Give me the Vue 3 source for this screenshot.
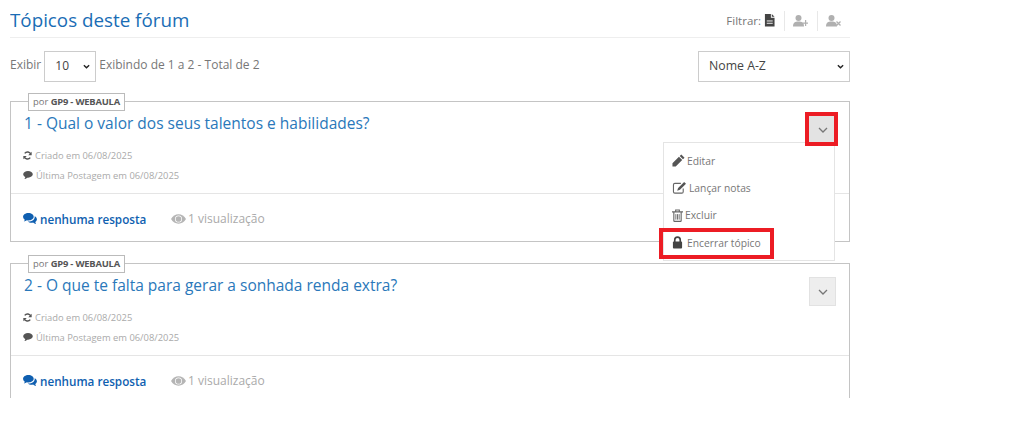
<script setup>
const topics = [
  { id: 1, title: '1 - Qual o valor dos seus talentos e habilidades?', open: true },
  { id: 2, title: '2 - O que te falta para gerar a sonhada renda extra?', open: false }
]
</script>

<template>
  <div class="page">
    <header class="head">
      <h1>Tópicos deste fórum</h1>
      <div class="filters">
        <span class="flabel">Filtrar:</span>
        <svg class="fi" viewBox="0 0 12 14" width="11" height="13"><path fill="#444" d="M1 0h6.500v4H11.500v9.500H1z M8.500 0l3 3h-3z"/><rect x="3" y="7" width="6.500" height="1" fill="#fff"/><rect x="3" y="9.500" width="6.500" height="1" fill="#fff"/></svg>
        <span class="fsep"></span>
        <svg class="fi" viewBox="0 0 15 12" width="15" height="12"><circle cx="5.500" cy="3" r="3" fill="#b0b0b0"/><path fill="#b0b0b0" d="M0 11.500c0-3.800 2-5 5.500-5s5.500 1.200 5.500 5z"/><path fill="#b0b0b0" d="M9.500 7.500H12V5h1.200v2.500H15v1.200h-1.800V11H12V8.700H9.500z"/></svg>
        <span class="fsep"></span>
        <svg class="fi" viewBox="0 0 15 12" width="15" height="12"><circle cx="5.500" cy="3" r="3" fill="#b0b0b0"/><path fill="#b0b0b0" d="M0 11.500c0-3.800 2-5 5.500-5s5.500 1.200 5.500 5z"/><path stroke="#b0b0b0" stroke-width="1.300" d="M10.500 6.500l4 4M14.500 6.500l-4 4"/></svg>
      </div>
    </header>

    <div class="toolbar">
      <div class="show">
        <span class="up">Exibir</span>
        <select class="sel-n"><option>10</option></select>
        <span class="up">Exibindo de 1 a 2 - Total de 2</span>
      </div>
      <select class="sel-o"><option>Nome A-Z</option></select>
    </div>

    <article v-for="t in topics" :key="t.id" class="card">
      <span class="tag">por <b>GP9 - WEBAULA</b></span>
      <div class="body">
        <div class="row">
          <a class="title">{{ t.title }}</a>
          <button class="drop" :class="{ marked: t.open }">
            <svg viewBox="0 0 10 6" width="10" height="6"><path d="M1 1l4 4 4-4" fill="none" stroke="#777" stroke-width="1.300"/></svg>
          </button>
        </div>
        <p class="meta first">
          <svg viewBox="0 0 12 12" width="9" height="9"><path d="M10.500 4.500A4.700 4.700 0 0 0 2.300 3.200M1.500 7.500a4.700 4.700 0 0 0 8.200 1.300" fill="none" stroke="#555" stroke-width="2"/><path fill="#555" d="M11.500 1v4.500H7zM.5 11V6.500H5z"/></svg>
          <span>Criado em 06/08/2025</span>
        </p>
        <p class="meta">
          <svg viewBox="0 0 12 10" width="10" height="8"><path fill="#555" d="M6 0c3.300 0 6 1.800 6 4.200S9.300 8.300 6 8.300h-1C4 9.300 2.800 9.800 1.500 10c.6-.7 1-1.500 1.100-2.400C1 6.900 0 5.700 0 4.200 0 1.800 2.700 0 6 0z"/></svg>
          <span>Última Postagem em 06/08/2025</span>
        </p>
      </div>
      <footer class="foot">
        <span class="replies">
          <svg viewBox="0 0 15 13" width="14" height="12"><path fill="#0f5fb0" d="M5.800 0C9 0 11.500 1.800 11.500 4S9 8 5.800 8c-.6 0-1.100 0-1.600-.2C3.200 8.600 2 9 .8 9.200c.5-.6.9-1.300 1-2C.7 6.400 0 5.300 0 4 0 1.800 2.600 0 5.800 0z"/><path fill="#0f5fb0" d="M12.600 3.400C14 4.200 15 5.400 15 6.800c0 1.200-.7 2.300-1.800 3 .1.800.5 1.500 1 2.100-1.300-.2-2.400-.7-3.400-1.500-.5.100-1 .2-1.600.2-1.700 0-3.200-.6-4.100-1.400 4.300.2 7.900-2 7.500-5.800z"/></svg>
          nenhuma resposta
        </span>
        <span class="views">
          <svg viewBox="0 0 16 10" width="15" height="10"><path fill="#b5b5b5" d="M8 0c3.300 0 6.200 2 8 5-1.800 3-4.700 5-8 5S1.800 8 0 5c1.800-3 4.700-5 8-5z"/><circle cx="8" cy="5" r="3.800" fill="#fff"/><circle cx="8" cy="5" r="3" fill="#b5b5b5"/></svg>
          1 visualização
        </span>
      </footer>

      <ul v-if="t.open" class="menu">
        <li>
          <svg viewBox="0 0 14 14" width="13" height="13"><path fill="#555" d="M10 0.500l3.500 3.500-1.700 1.700-3.500-3.500zM7.500 3l3.500 3.500-7 7H.5V10z"/></svg>
          <span>Editar</span>
        </li>
        <li>
          <svg viewBox="0 0 15 14" width="15" height="13"><path fill="none" stroke="#666" stroke-width="1.200" d="M11.500 8v3.500a1.500 1.500 0 0 1-1.500 1.500H2.500A1.500 1.500 0 0 1 1 11.500V4a1.500 1.500 0 0 1 1.500-1.500H9"/><path fill="#555" d="M12.500 1l2 2-6.500 6.500-3 1 1-3z"/></svg>
          <span>Lançar notas</span>
        </li>
        <li>
          <svg viewBox="0 0 12 14" width="11" height="13"><path fill="none" stroke="#666" stroke-width="1.200" d="M2 3.500v9.200c0 .4.300.7.700.7h6.600c.4 0 .7-.3.700-.7V3.500M0 3h12M4 3V1h4v2"/><path stroke="#666" d="M4.200 5.500v6M6 5.500v6M7.800 5.500v6"/></svg>
          <span>Excluir</span>
        </li>
        <li class="marked-item">
          <svg viewBox="0 0 12 14" width="11" height="13"><path fill="none" stroke="#444" stroke-width="1.800" d="M3 6.500V4.200a3 3 0 0 1 6 0v2.300"/><rect x="1" y="6" width="10" height="7.500" rx="1" fill="#444"/></svg>
          <span>Encerrar tópico</span>
        </li>
      </ul>
    </article>
  </div>
</template>

<style scoped>
.page {
  box-sizing: border-box;
  width: 850px;
  height: 398px;
  margin-left: 10px;
  overflow: hidden;
  font-family: "Open Sans", sans-serif;
  color: #777;
}
.head {
  display: flex;
  justify-content: space-between;
  align-items: center;
  height: 37px;
  border-bottom: 1px solid #eee;
  width: 840px;
}
h1 {
  margin: 0;
  font-size: 18.800px;
  font-weight: 400;
  color: #1a6db5;
  line-height: 26px;
  position: relative;
  top: 1px;
}
.filters {
  display: flex;
  align-items: center;
  height: 20px;
  margin-right: 9px;
  margin-top: 4px;
}
.flabel { font-size: 11.500px; color: #777; margin-right: 3px; }
.fsep { width: 1px; height: 20px; background: #e8e8e8; margin: 0 8.500px; }
.toolbar {
  display: flex;
  justify-content: space-between;
  align-items: center;
  width: 840px;
  margin-top: 13px;
}
.show { display: flex; align-items: center; gap: 3px; font-size: 12px; color: #777; }
.up { position: relative; top: -2px; }
select {
  appearance: none;
  font-family: "Open Sans", sans-serif;
  background: #fff url("data:image/svg+xml,%3Csvg xmlns='http://www.w3.org/2000/svg' viewBox='0 0 8 5'%3E%3Cpath d='M1 1l3 3 3-3' fill='none' stroke='%23222' stroke-width='1.600'/%3E%3C/svg%3E") no-repeat right 5px center / 7px 5px;
  border: 1px solid #ccc;
  border-radius: 0;
  color: #444;
  font-size: 12px;
  height: 31px;
  padding: 0 0 2px 10px;
}
.sel-n { width: 52px; }
.sel-o { width: 152px; font-weight: 500; font-size: 12.300px; }
.card {
  position: relative;
  box-sizing: border-box;
  width: 840px;
  height: 141px;
  border: 1px solid #c4c4c4;
  margin-top: 19px;
}
.card + .card { margin-top: 21px; }
.tag {
  position: absolute;
  left: 17px;
  top: -9px;
  height: 18px;
  line-height: 16px;
  box-sizing: border-box;
  padding: 0 4px;
  border: 1px solid #bbb;
  background: #fff;
  font-size: 9.400px;
  color: #777;
  white-space: nowrap;
}
.tag b { color: #555; font-weight: 700; letter-spacing: -0.200px; }
.body { height: 91px; border-bottom: 1px solid #e5e5e5; padding-left: 12px; }
.row {
  display: flex;
  justify-content: space-between;
  align-items: flex-start;
  padding-right: 13px;
  padding-top: 11px;
  height: 42px;
  box-sizing: border-box;
}
.title { font-size: 15.500px; color: #2a78ba; line-height: 20px; margin-left: 1px; }
.drop {
  width: 27px;
  height: 29px;
  padding: 0;
  margin-top: 2px;
  background: #eee;
  border: 1px solid #e2e2e2;
  display: flex;
  align-items: center;
  justify-content: center;
  position: relative;
  box-sizing: border-box;
}
.drop.marked { background: #e3e3e3; z-index: 3; }
.drop.marked::after {
  content: "";
  position: absolute;
  left: -5px;
  top: -4px;
  width: 33px;
  height: 34px;
  box-sizing: border-box;
  border: 4px solid #ec1c24;
}
.meta {
  margin: 0;
  display: flex;
  align-items: center;
  gap: 3px;
  font-size: 9.400px;
  color: #aaa;
  height: 20px;
}
.meta.first { margin-top: 1px; }
.foot {
  display: flex;
  align-items: center;
  height: 49px;
  padding-left: 12px;
  box-sizing: border-box;
}
.replies {
  display: flex;
  align-items: center;
  gap: 3px;
  font-size: 11.700px;
  font-weight: 600;
  color: #0f5fb0;
  width: 148px;
}
.views {
  display: flex;
  align-items: center;
  gap: 2px;
  font-size: 12px;
  color: #aaa;
}
.menu {
  position: absolute;
  left: 652px;
  top: 40px;
  width: 172px;
  height: 119px;
  margin: 0;
  padding: 4px 0 0;
  list-style: none;
  box-sizing: border-box;
  background: #fff;
  border: 1px solid #e4e4e4;
  z-index: 2;
}
.menu li {
  display: flex;
  align-items: center;
  gap: 2px;
  height: 27.300px;
  padding-left: 8px;
  font-size: 10.300px;
  color: #777;
  position: relative;
}
.marked-item { gap: 4px !important; padding-left: 8px !important; }
.marked-item::after {
  content: "";
  position: absolute;
  left: -5px;
  top: -1px;
  width: 115px;
  height: 31px;
  box-sizing: border-box;
  border: 4px solid #ec1c24;
}
</style>

<style>
html, body { background: #fff; }
</style>
